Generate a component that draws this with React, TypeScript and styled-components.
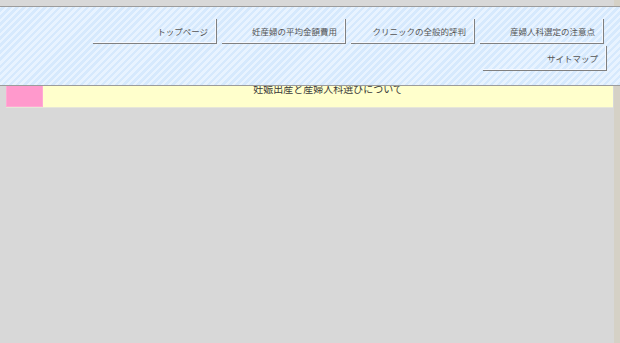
import React from "react";
import styled, { createGlobalStyle } from "styled-components";

const Global = createGlobalStyle`
  html, body { margin: 0; padding: 0; }
  body {
    background: #d8d8d8;
    font-family: "Noto Sans CJK JP", "Noto Sans", sans-serif;
    overflow: hidden;
  }
`;

const Page = styled.div`
  display: flex;
  width: 620px;
  height: 343px;
`;

const Main = styled.main`
  flex: 1;
  padding: 80px 1px 0 6px;
`;

const SideStrip = styled.div`
  width: 6px;
  background: #d5d1c6;
`;

const TitleRow = styled.div`
  display: flex;
  height: 27px;
  border-bottom: 1px solid #e6e6d8;
`;

const PinkMark = styled.div`
  width: 37px;
  background: #ff99cc;
  box-shadow: inset 0 0 0 1px #ffaad4;
`;

const TitleBox = styled.div`
  flex: 1;
  background: #ffffcc;
  text-align: center;
  padding-top: 2px;
  font-size: 10px;
  line-height: 14px;
  color: #3a3a3a;
`;

const Header = styled.header`
  position: fixed;
  top: 6px;
  left: 0;
  right: 0;
  height: 78px;
  border-top: 1px solid #9c9c9c;
  border-bottom: 1px solid #9c9c9c;
  background: repeating-linear-gradient(
    -45deg,
    #d6e9fd 0px,
    #d6e9fd 2.5px,
    #e8f3ff 2.5px,
    #e8f3ff 5px
  );
  z-index: 10;
`;

const Nav = styled.nav`
  display: flex;
  flex-direction: column;
  align-items: flex-end;
  gap: 2px;
  padding: 12px 13px 0 0;
`;

const NavRow = styled.div<{ $shift: number }>`
  display: flex;
  gap: 5px;
  margin-right: ${(p) => p.$shift}px;
`;

const NavButton = styled.a`
  box-sizing: border-box;
  width: 124px;
  height: 25px;
  display: flex;
  align-items: center;
  justify-content: flex-end;
  padding-right: 8px;
  border-right: 1px solid #808080;
  border-bottom: 1px solid #808080;
  box-shadow: inset -1px -1px 0 #f4f8ff;
  font-size: 8.5px;
  color: #555;
  text-decoration: none;
  cursor: pointer;
`;

const row1 = [
  "トップページ",
  "妊産婦の平均金額費用",
  "クリニックの全般的評判",
  "産婦人科選定の注意点",
];

export default function App() {
  return (
    <>
      <Global />
      <Page>
        <Main>
          <TitleRow>
            <PinkMark />
            <TitleBox>妊娠出産と産婦人科選びについて</TitleBox>
          </TitleRow>
        </Main>
        <SideStrip />
      </Page>
      <Header>
        <Nav>
          <NavRow $shift={3}>
            {row1.map((t) => (
              <NavButton key={t}>{t}</NavButton>
            ))}
          </NavRow>
          <NavRow $shift={0}>
            <NavButton>サイトマップ</NavButton>
          </NavRow>
        </Nav>
      </Header>
    </>
  );
}
